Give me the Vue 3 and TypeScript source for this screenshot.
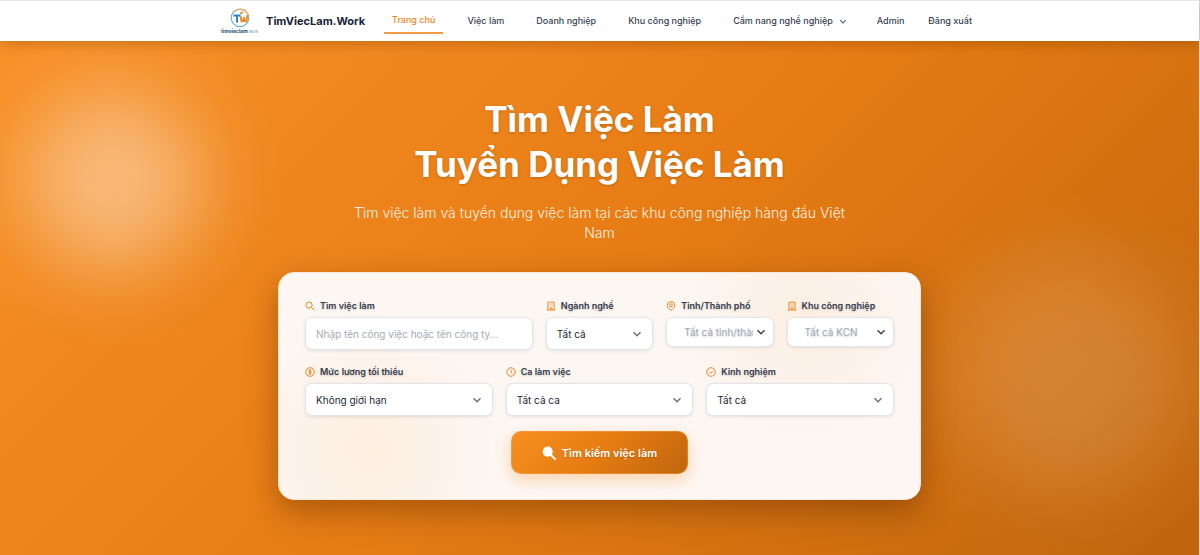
<script setup lang="ts">
import { ref } from 'vue'

interface NavItem { label: string; active?: boolean; menu?: boolean }
interface SelectField { id: string; label: string; value: string; icon: string }
interface ComboField { id: string; label: string; placeholder: string; icon: string }

const nav: NavItem[] = [
  { label: 'Trang chủ', active: true },
  { label: 'Việc làm' },
  { label: 'Doanh nghiệp' },
  { label: 'Khu công nghiệp' },
  { label: 'Cẩm nang nghề nghiệp', menu: true },
]
const account: string[] = ['Admin', 'Đăng xuất']
const combos: ComboField[] = [
  { id: 'province', label: 'Tỉnh/Thành phố', placeholder: 'Tất cả tỉnh/thành', icon: 'pin' },
  { id: 'zone', label: 'Khu công nghiệp', placeholder: 'Tất cả KCN', icon: 'bank' },
]
const selects: SelectField[] = [
  { id: 'salary', label: 'Mức lương tối thiểu', value: 'Không giới hạn', icon: 'dollar' },
  { id: 'shift', label: 'Ca làm việc', value: 'Tất cả ca', icon: 'clock' },
  { id: 'experience', label: 'Kinh nghiệm', value: 'Tất cả', icon: 'check' },
]
const icons: Record<string, string> = {
  search: 'M6.500 1.500a5 5 0 1 1 0 10a5 5 0 1 1 0-10M10.200 10.200L14.800 14.800',
  bank: 'M3 14V1.800h10v12.200M1.200 14.500h13.600M5.500 5h1.500M9 5h1.500M5.500 8h1.500M9 8h1.500M6.500 14v-3h3v3',
  pin: 'M8 15C5 13 2 10 2 7a6 6 0 0 1 12 0c0 3-3 6-6 8zM8 4.600a2.300 2.300 0 1 1 0 4.600a2.300 2.300 0 1 1 0-4.600',
  dollar: 'M8 1.200a6.800 6.800 0 1 1 0 13.600a6.800 6.800 0 1 1 0-13.600M10 6c-.4-.8-1.100-1-2-1c-1.200 0-2 .6-2 1.500c0 2 4.100 1 4.100 3c0 1-.9 1.500-2.100 1.500c-1 0-1.800-.3-2.200-1.200M8 3.800v8.400',
  clock: 'M8 1.200a6.800 6.800 0 1 1 0 13.600a6.800 6.800 0 1 1 0-13.600M8 4.200V8.300l2.400 1.900',
  check: 'M8 1.200a6.800 6.800 0 1 1 0 13.600a6.800 6.800 0 1 1 0-13.600M5.300 8.200l1.900 1.900l3.600-3.900',
}
const keyword = ref('')
</script>

<template>
  <div class="page">
    <header class="topbar">
      <a class="brand" href="#">
        <svg class="logo" viewBox="0 0 38 26" aria-hidden="true">
          <circle cx="19" cy="10" r="8.700" fill="#fff" stroke="#6fb0d9" stroke-width="1.200" />
          <path d="M11.500 5.300A8.700 8.700 0 0 1 27.500 8" fill="none" stroke="#f2b35f" stroke-width="1.200" />
          <path d="M12.500 7.500h7M16 7.500v7" fill="none" stroke="#2b86c4" stroke-width="2" />
          <path d="M19.500 8l1 5.200h1.500l1-4l1 4h1.400l1-6" fill="none" stroke="#f08c25" stroke-width="1.900" />
          <circle cx="20.500" cy="5" r="1.400" fill="#f08c25" />
          <text x="0" y="25" font-size="5" font-weight="700" fill="#174a7c">timvieclam<tspan font-size="4" font-weight="400" fill="#6d94b3">.work</tspan></text>
        </svg>
        <span>TimViecLam.Work</span>
      </a>
      <nav class="nav">
        <a v-for="item in nav" :key="item.label" href="#" :class="{ active: item.active }">
          {{ item.label }}
          <svg v-if="item.menu" class="caret" viewBox="0 0 10 10" aria-hidden="true"><path d="M1.500 4L5 7.500l3.500-3.500" /></svg>
        </a>
      </nav>
      <div class="account">
        <a v-for="item in account" :key="item" href="#">{{ item }}</a>
      </div>
    </header>

    <main class="hero">
      <span class="glow glow-left"></span>
      <span class="glow glow-right"></span>
      <h1>Tìm Việc Làm<br />Tuyển Dụng Việc Làm</h1>
      <p class="lead">Tìm việc làm và tuyển dụng việc làm tại các khu công nghiệp hàng đầu Việt Nam</p>

      <form class="card" @submit.prevent>
        <div class="row row-main">
          <div class="field wide">
            <label for="keyword"><svg class="icon" viewBox="0 0 16 16"><path :d="icons.search" /></svg>Tìm việc làm</label>
            <input id="keyword" v-model="keyword" class="control" type="text" placeholder="Nhập tên công việc hoặc tên công ty..." />
          </div>
          <div class="field">
            <label for="industry"><svg class="icon" viewBox="0 0 16 16"><path :d="icons.bank" /></svg>Ngành nghề</label>
            <div class="box">
              <select id="industry" class="control"><option>Tất cả</option></select>
              <svg class="arrow" viewBox="0 0 10 10"><path d="M1.500 3.200L5 6.700l3.500-3.500" /></svg>
            </div>
          </div>
          <div v-for="field in combos" :key="field.id" class="field">
            <label :for="field.id"><svg class="icon" viewBox="0 0 16 16"><path :d="icons[field.icon]" /></svg>{{ field.label }}</label>
            <div class="box">
              <input :id="field.id" class="control combo" type="text" role="combobox" aria-expanded="false" :placeholder="field.placeholder" />
              <svg class="arrow dark" viewBox="0 0 10 10"><path d="M1.500 3.200L5 6.700l3.500-3.500" /></svg>
            </div>
          </div>
        </div>
        <div class="row row-extra">
          <div v-for="field in selects" :key="field.id" class="field">
            <label :for="field.id"><svg class="icon" viewBox="0 0 16 16"><path :d="icons[field.icon]" /></svg>{{ field.label }}</label>
            <div class="box">
              <select :id="field.id" class="control"><option>{{ field.value }}</option></select>
              <svg class="arrow" viewBox="0 0 10 10"><path d="M1.500 3.200L5 6.700l3.500-3.500" /></svg>
            </div>
          </div>
        </div>
        <button class="submit" type="submit">
          <svg viewBox="0 0 16 16" aria-hidden="true"><circle cx="6.500" cy="6.500" r="5.800" fill="currentColor" /><path d="M10 10l5 5" stroke="currentColor" stroke-width="2.400" stroke-linecap="round" /></svg>
          Tìm kiếm việc làm
        </button>
      </form>
    </main>
  </div>
</template>

<style>
body { background: #c4650b; }
</style>

<style scoped>
.page {
  min-height: 100vh;
  display: flex;
  flex-direction: column;
  border-right: 1px solid #e4e0dc;
  font-family: Inter, "Liberation Sans", sans-serif;
  color: #1f2937;
}
.page *, .page { box-sizing: border-box; }
a { color: inherit; text-decoration: none; }

.topbar {
  position: relative;
  z-index: 1;
  display: flex;
  align-items: center;
  justify-content: center;
  height: 41px;
  padding-right: 6px;
  border-top: 1px solid #e8e8e8;
  background: #fff;
  box-shadow: 0 2px 12px rgba(80, 40, 0, 0.3);
  font-size: 9px;
  line-height: 12px;
  font-weight: 500;
  color: #374151;
}
.brand {
  display: flex;
  align-items: center;
  gap: 7px;
  font-size: 11px;
  font-weight: 700;
  color: #1a2238;
}
.logo { width: 38px; height: 26px; }
.nav { display: flex; align-items: center; gap: 16px; margin-left: 19px; }
.nav a { display: flex; align-items: center; gap: 6px; padding: 6px 8px; }
.nav a.active { color: #ee8420; border-bottom: 2px solid #f29a45; }
.caret { width: 8px; height: 8px; fill: none; stroke: #4b5563; stroke-width: 1.3; }
.account { display: flex; gap: 24px; margin-left: 22px; }

.hero {
  position: relative;
  flex: 1;
  display: flex;
  flex-direction: column;
  align-items: center;
  padding: 56px 24px 54px;
  overflow: hidden;
  background: linear-gradient(135deg, #f99128 0%, #e67c13 50%, #c0650d 100%);
}
.glow { position: absolute; border-radius: 50%; }
.glow-left {
  left: 2%;
  top: 50px;
  width: 180px;
  height: 180px;
  background: rgba(255, 255, 255, 0.4);
  filter: blur(40px);
}
.glow-right {
  right: 1%;
  top: 215px;
  width: 240px;
  height: 240px;
  background: rgba(255, 255, 255, 0.14);
  filter: blur(40px);
}
h1 {
  position: relative;
  margin: 0;
  font-size: 35px;
  line-height: 45px;
  font-weight: 700;
  text-align: center;
  color: #fff;
  text-shadow: 0 1px 3px rgba(0, 0, 0, 0.2);
}
.lead {
  position: relative;
  max-width: 510px;
  margin: 16px 0 29px;
  font-size: 14px;
  line-height: 20px;
  font-weight: 300;
  text-align: center;
  color: #fff0e2;
}
.card {
  position: relative;
  width: 100%;
  max-width: 643px;
  padding: 26px 26px 25px;
  display: flex;
  flex-direction: column;
  align-items: center;
  border-radius: 16px;
  background:
    radial-gradient(circle at 82% 22%, #fcefe3 0, rgba(252, 239, 227, 0) 24%),
    radial-gradient(circle at 14% 78%, #fdeee0 0, rgba(253, 238, 224, 0) 24%),
    #fdf7f3;
  border: 1px solid #f9e6d6;
  box-shadow: 0 12px 32px rgba(70, 30, 0, 0.38);
}
.row { display: grid; gap: 13px; width: 100%; margin-bottom: 15px; }
.row-main { grid-template-columns: repeat(5, minmax(0, 1fr)); }
.row-extra { grid-template-columns: repeat(3, minmax(0, 1fr)); }
.wide { grid-column: span 2; }
label {
  display: flex;
  align-items: center;
  gap: 5px;
  height: 14px;
  margin-bottom: 4px;
  font-size: 9px;
  line-height: 14px;
  font-weight: 600;
  color: #374151;
  white-space: nowrap;
  text-shadow: 0 1px 2px rgba(0, 0, 0, 0.2);
}
.icon { width: 10px; height: 10px; fill: none; stroke: #ee8420; stroke-width: 1.6; }
.box { position: relative; }
.control {
  display: block;
  width: 100%;
  height: 33px;
  padding: 0 10px;
  border: 1px solid #e2e6ec;
  border-radius: 7px;
  outline: none;
  appearance: none;
  background: #fff;
  box-shadow: 0 1px 3px rgba(60, 60, 90, 0.12);
  font: 400 10px/14px Inter, "Liberation Sans", sans-serif;
  color: #1f2937;
}
.control::placeholder { color: #a5abb6; opacity: 1; }
.control.combo { height: 30px; padding: 0 20px 0 17px; text-shadow: 0 1px 2px rgba(0, 0, 0, 0.2); }
.arrow {
  position: absolute;
  right: 11px;
  top: 50%;
  width: 10px;
  height: 10px;
  margin-top: -5px;
  fill: none;
  stroke: #6b7280;
  stroke-width: 1.5;
  pointer-events: none;
}
.arrow.dark { right: 8px; stroke: #444; }
.submit {
  display: flex;
  align-items: center;
  justify-content: center;
  gap: 6px;
  height: 43px;
  padding: 0 30px;
  border: 1px solid rgba(255, 170, 90, 0.4);
  border-radius: 10px;
  background: linear-gradient(135deg, #f78f20 0%, #e67c12 50%, #c0650d 100%);
  background-origin: border-box;
  box-shadow: 0 6px 16px rgba(245, 145, 40, 0.35);
  font: 600 11px/16px Inter, "Liberation Sans", sans-serif;
  color: #fff;
  text-shadow: 0 1px 2px rgba(0, 0, 0, 0.2);
}
.submit svg { width: 14px; height: 14px; }
</style>
